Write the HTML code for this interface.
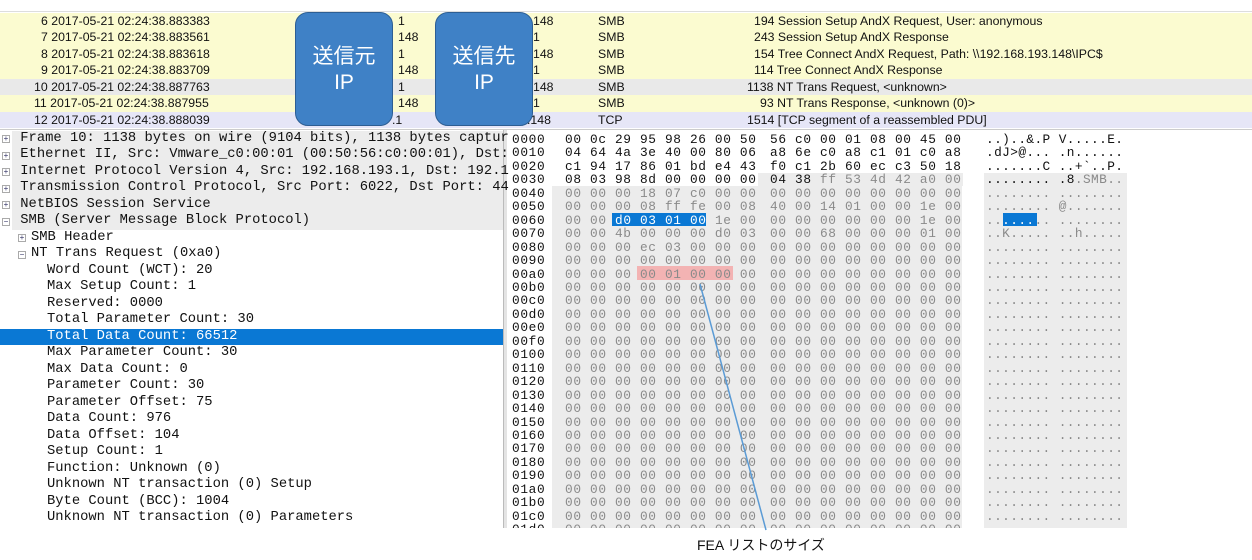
<!DOCTYPE html>
<html><head><meta charset="utf-8"><style>
*{margin:0;padding:0;box-sizing:border-box}
html,body{width:1252px;height:560px;overflow:hidden}
body{background:#fff;position:relative;font-family:"Liberation Mono",monospace;color:#111}
.pr{position:absolute;left:0;width:1252px;height:16.5px;font-family:"Liberation Sans",sans-serif;font-size:12.3px;line-height:16.5px;background:#fbfbd0}
.pr span{position:absolute;white-space:pre}
.box{position:absolute;top:12px;height:114px;width:98px;background:#3f81c6;border:1.5px solid #2d5e93;border-radius:13px;color:#fff;font-family:"Liberation Sans","Noto Sans CJK JP",sans-serif;font-size:21px;line-height:26px;text-align:center;padding-top:31px}
.dl{position:absolute;left:0;width:503px;height:16.5px;font-size:13.8px;line-height:16.5px;white-space:pre}
.dl.g{background:#ececec;left:12px;width:491px}
.ic{position:absolute;width:8px;height:8px;border:1px solid #aaa;font-size:8px;line-height:6px;text-align:center;color:#336;font-family:"Liberation Sans",sans-serif;background:#fff}
.hx{position:absolute;font-size:12.8px;letter-spacing:0.65px;line-height:13.45px;white-space:pre}
.gr{color:#8a8a8a}
</style></head><body>
<div style="position:absolute;left:0;top:0;width:1252px;height:12px;background:#fff;border-bottom:1px solid #ddd"></div>
<div class="pr" style="top:12.5px"><span style="left:41px">6 2017-05-21 02:24:38.883383</span><span style="left:398px">1</span><span style="left:533px">148</span><span style="left:598px">SMB</span><span style="left:754px">194 Session Setup AndX Request, User: anonymous</span></div>
<div class="pr" style="top:29px"><span style="left:41px">7 2017-05-21 02:24:38.883561</span><span style="left:398px">148</span><span style="left:533px">1</span><span style="left:598px">SMB</span><span style="left:754px">243 Session Setup AndX Response</span></div>
<div class="pr" style="top:45.5px"><span style="left:41px">8 2017-05-21 02:24:38.883618</span><span style="left:398px">1</span><span style="left:533px">148</span><span style="left:598px">SMB</span><span style="left:754px">154 Tree Connect AndX Request, Path: \\192.168.193.148\IPC$</span></div>
<div class="pr" style="top:62px"><span style="left:41px">9 2017-05-21 02:24:38.883709</span><span style="left:398px">148</span><span style="left:533px">1</span><span style="left:598px">SMB</span><span style="left:754px">114 Tree Connect AndX Response</span></div>
<div class="pr" style="top:78.5px;background:#e9e9e9"><span style="left:34px">10 2017-05-21 02:24:38.887763</span><span style="left:398px">1</span><span style="left:533px">148</span><span style="left:598px">SMB</span><span style="left:747px">1138 NT Trans Request, &lt;unknown&gt;</span></div>
<div class="pr" style="top:95px"><span style="left:34px">11 2017-05-21 02:24:38.887955</span><span style="left:398px">148</span><span style="left:533px">1</span><span style="left:598px">SMB</span><span style="left:760px">93 NT Trans Response, &lt;unknown (0)&gt;</span></div>
<div class="pr" style="top:111.5px;background:#e6e6f7"><span style="left:34px">12 2017-05-21 02:24:38.888039</span><span style="left:392px">.1</span><span style="left:527px">.148</span><span style="left:598px">TCP</span><span style="left:747px">1514 [TCP segment of a reassembled PDU]</span></div>
<div class="box" style="left:295px">送信元<br>IP</div>
<div class="box" style="left:435px">送信先<br>IP</div>
<div style="position:absolute;left:0;top:129px;width:1252px;height:1px;background:#ccc"></div>

<div style="position:absolute;left:503px;top:130px;width:4px;height:398px;background:#e4e4e4;border-left:1px solid #bbb"></div>

<div class="dl g" style="top:130.8px"> Frame 10: 1138 bytes on wire (9104 bits), 1138 bytes captur</div>
<div class="dl g" style="top:147.3px"> Ethernet II, Src: Vmware_c0:00:01 (00:50:56:c0:00:01), Dst:</div>
<div class="dl g" style="top:163.8px"> Internet Protocol Version 4, Src: 192.168.193.1, Dst: 192.1</div>
<div class="dl g" style="top:180.3px"> Transmission Control Protocol, Src Port: 6022, Dst Port: 44</div>
<div class="dl g" style="top:196.8px"> NetBIOS Session Service</div>
<div class="dl g" style="top:213.3px"> SMB (Server Message Block Protocol)</div>
<div class="ic" style="left:2px;top:135px">+</div><div class="ic" style="left:2px;top:151.5px">+</div><div class="ic" style="left:2px;top:168px">+</div><div class="ic" style="left:2px;top:184.5px">+</div><div class="ic" style="left:2px;top:201px">+</div><div class="ic" style="left:2px;top:217.5px">−</div>
<div class="ic" style="left:18px;top:234px">+</div><div class="ic" style="left:18px;top:250.5px">−</div>
<div class="dl" style="top:229.8px;left:31px">SMB Header</div>
<div class="dl" style="top:246.3px;left:31px">NT Trans Request (0xa0)</div>
<div class="dl" style="top:262.8px;left:47px">Word Count (WCT): 20</div>
<div class="dl" style="top:279.3px;left:47px">Max Setup Count: 1</div>
<div class="dl" style="top:295.8px;left:47px">Reserved: 0000</div>
<div class="dl" style="top:312.3px;left:47px">Total Parameter Count: 30</div>
<div class="dl" style="top:328.8px;background:#0a78d4;color:#fff;padding-left:47px">Total Data Count: 66512</div>
<div class="dl" style="top:345.3px;left:47px">Max Parameter Count: 30</div>
<div class="dl" style="top:361.8px;left:47px">Max Data Count: 0</div>
<div class="dl" style="top:378.3px;left:47px">Parameter Count: 30</div>
<div class="dl" style="top:394.8px;left:47px">Parameter Offset: 75</div>
<div class="dl" style="top:411.3px;left:47px">Data Count: 976</div>
<div class="dl" style="top:427.8px;left:47px">Data Offset: 104</div>
<div class="dl" style="top:444.3px;left:47px">Setup Count: 1</div>
<div class="dl" style="top:460.8px;left:47px">Function: Unknown (0)</div>
<div class="dl" style="top:477.3px;left:47px">Unknown NT transaction (0) Setup</div>
<div class="dl" style="top:493.8px;left:47px">Byte Count (BCC): 1004</div>
<div class="dl" style="top:510.3px;left:47px">Unknown NT transaction (0) Parameters</div>

<div style="position:absolute;left:508px;top:130px;width:619px;height:398px;overflow:hidden">
<div style="position:absolute;left:44px;top:56px;width:410px;height:350px;background:#ececec"></div>
<div style="position:absolute;left:250px;top:43px;width:205px;height:13px;background:#ececec"></div>
<div style="position:absolute;left:476px;top:43px;width:143px;height:360px;background:#ececec"></div>
<div style="position:absolute;left:104px;top:83px;width:94px;height:13px;background:#0a78d4"></div>
<div style="position:absolute;left:129px;top:136px;width:96px;height:14px;background:#f3b3b3"></div>
<div style="position:absolute;left:495px;top:83px;width:34px;height:13px;background:#0a78d4"></div>
<div class="hx" style="left:4px;top:3px">0000
0010
0020
0030
0040
0050
0060
0070
0080
0090
00a0
00b0
00c0
00d0
00e0
00f0
0100
0110
0120
0130
0140
0150
0160
0170
0180
0190
01a0
01b0
01c0
01d0</div>
<div class="hx" style="left:57px;top:3px">00 0c 29 95 98 26 00 50
04 64 4a 3e 40 00 80 06
c1 94 17 86 01 bd e4 43
08 03 98 8d 00 00 00 00
<span class="gr">00 00 00 18 07 c0 00 00
00 00 00 08 ff fe 00 08
00 00 <span style="color:#fff">d0 03 01 00</span> 1e 00
00 00 4b 00 00 00 d0 03
00 00 00 ec 03 00 00 00
00 00 00 00 00 00 00 00
00 00 00 00 01 00 00 00
00 00 00 00 00 00 00 00
00 00 00 00 00 00 00 00
00 00 00 00 00 00 00 00
00 00 00 00 00 00 00 00
00 00 00 00 00 00 00 00
00 00 00 00 00 00 00 00
00 00 00 00 00 00 00 00
00 00 00 00 00 00 00 00
00 00 00 00 00 00 00 00
00 00 00 00 00 00 00 00
00 00 00 00 00 00 00 00
00 00 00 00 00 00 00 00
00 00 00 00 00 00 00 00
00 00 00 00 00 00 00 00
00 00 00 00 00 00 00 00
00 00 00 00 00 00 00 00
00 00 00 00 00 00 00 00
00 00 00 00 00 00 00 00
00 00 00 00 00 00 00 00</span></div>
<div class="hx" style="left:262px;top:3px">56 c0 00 01 08 00 45 00
a8 6e c0 a8 c1 01 c0 a8
f0 c1 2b 60 ec c3 50 18
04 38 <span class="gr">ff 53 4d 42 a0 00</span><span class="gr">
00 00 00 00 00 00 00 00
40 00 14 01 00 00 1e 00
00 00 00 00 00 00 1e 00
00 00 68 00 00 00 01 00
00 00 00 00 00 00 00 00
00 00 00 00 00 00 00 00
00 00 00 00 00 00 00 00
00 00 00 00 00 00 00 00
00 00 00 00 00 00 00 00
00 00 00 00 00 00 00 00
00 00 00 00 00 00 00 00
00 00 00 00 00 00 00 00
00 00 00 00 00 00 00 00
00 00 00 00 00 00 00 00
00 00 00 00 00 00 00 00
00 00 00 00 00 00 00 00
00 00 00 00 00 00 00 00
00 00 00 00 00 00 00 00
00 00 00 00 00 00 00 00
00 00 00 00 00 00 00 00
00 00 00 00 00 00 00 00
00 00 00 00 00 00 00 00
00 00 00 00 00 00 00 00
00 00 00 00 00 00 00 00
00 00 00 00 00 00 00 00
00 00 00 00 00 00 00 00</span></div>
<div class="hx" style="left:478px;top:3px;letter-spacing:0.4px">..)..&amp;.P V.....E.
.dJ&gt;@... .n......
.......C ..+`..P.
........ .8<span class="gr">.SMB..</span><span class="gr">
........ ........
........ @.......
..<span style="color:#fff">....</span>.. ........
..K..... ..h.....
........ ........
........ ........
........ ........
........ ........
........ ........
........ ........
........ ........
........ ........
........ ........
........ ........
........ ........
........ ........
........ ........
........ ........
........ ........
........ ........
........ ........
........ ........
........ ........
........ ........
........ ........
........ ........</span></div>
</div>

<svg style="position:absolute;left:0;top:0" width="1252" height="560"><line x1="700" y1="284" x2="766" y2="530" stroke="#5b9bd5" stroke-width="1.5"/></svg>
<div style="position:absolute;left:697px;top:536px;font-family:'Liberation Sans','Noto Sans CJK JP',sans-serif;font-size:14px;line-height:18px;color:#111">FEA リストのサイズ</div>
</body></html>
